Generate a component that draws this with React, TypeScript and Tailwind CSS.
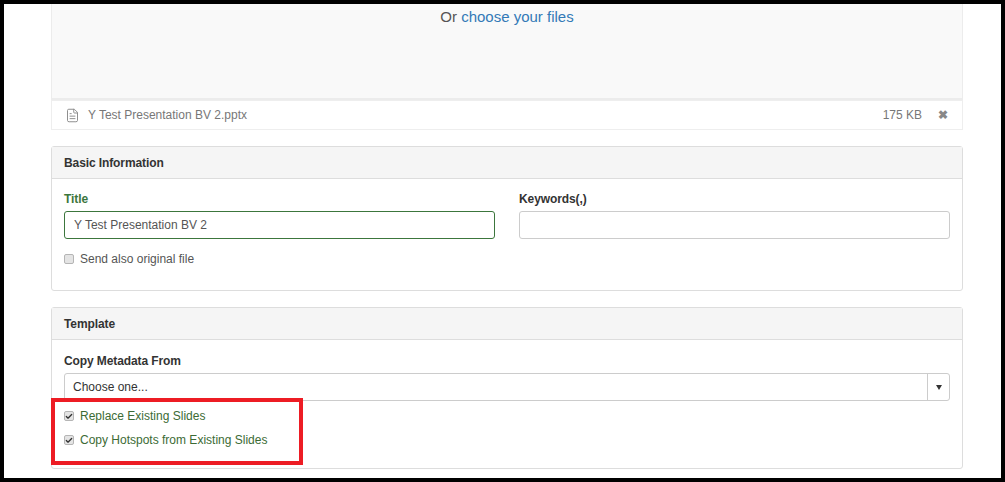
import { FileText, Check } from "lucide-react";

function CheckRow({ label, checked, green }: { label: string; checked?: boolean; green?: boolean }) {
  return (
    <label className="flex h-[24px] items-center">
      <span className="flex h-[10px] w-[10px] items-center justify-center rounded-[2px] border border-[#b5b5b5] bg-[#e4e4e4]">
        {checked && <Check className="h-[9px] w-[9px] text-[#333333]" strokeWidth={4} />}
      </span>
      <span className={`ml-[6px] text-[12px] ${green ? "text-[#3c6b35]" : "text-[#555555]"}`}>{label}</span>
    </label>
  );
}

function Panel({ title, className, children }: { title: string; className: string; children: React.ReactNode }) {
  return (
    <section className={`rounded-[3px] border border-[#dddddd] bg-white ${className}`}>
      <h3 className="flex h-[32px] items-center border-b border-[#dddddd] bg-[#f5f5f5] px-[12px] text-[12px] font-bold tracking-[-0.1px] text-[#333333]">
        {title}
      </h3>
      {children}
    </section>
  );
}

export default function App() {
  return (
    <div className="relative h-[482px] w-[1005px] overflow-hidden border-[4px] border-black bg-white font-['Liberation_Sans',sans-serif]">
      <div className="pl-[47px] pr-[38px]">
        <div className="h-[96px] border-x border-b-2 border-[#ececec] bg-[#f9f9f9] pt-[2px] text-center text-[15px] text-[#555555]">
          Or <a className="text-[#337ab7]">choose your files</a>
        </div>
        <div className="flex h-[30px] items-center border border-[#eeeeee] pl-[13px] pr-[14px] text-[12px] text-[#777777]">
          <FileText className="h-[15px] w-[15px] text-[#888888]" strokeWidth={1.5} />
          <span className="ml-[8px]">Y Test Presentation BV 2.pptx</span>
          <span className="ml-auto">175 KB</span>
          <span className="ml-[16px] text-[12px] font-bold leading-none text-[#888888]">✖</span>
        </div>

        <Panel title="Basic Information" className="mt-[16px] h-[145px]">
          <div className="grid grid-cols-2 gap-[24px] px-[12px] pt-[13px]">
            <div>
              <div className="text-[12px] font-bold leading-[14px] tracking-[-0.1px] text-[#3c763d]">Title</div>
              <input
                readOnly
                value="Y Test Presentation BV 2"
                className="mt-[5px] h-[28px] w-full rounded-[3px] border border-[#3c763d] px-[9px] text-[12px] text-[#555555] outline-none"
              />
            </div>
            <div>
              <div className="text-[12px] font-bold leading-[14px] tracking-[-0.1px] text-[#333333]">Keywords(,)</div>
              <input readOnly className="mt-[5px] h-[28px] w-full rounded-[3px] border border-[#cccccc] outline-none" />
            </div>
          </div>
          <div className="mt-[8px] px-[12px]">
            <CheckRow label="Send also original file" />
          </div>
        </Panel>

        <Panel title="Template" className="mt-[16px] h-[162px]">
          <div className="px-[12px] pt-[14px]">
            <div className="text-[12px] font-bold leading-[14px] tracking-[-0.1px] text-[#333333]">Copy Metadata From</div>
            <div className="mt-[5px] flex h-[28px] items-center rounded-[3px] border border-[#cccccc] text-[12px] text-[#333333]">
              <span className="flex-1 pl-[8px]">Choose one...</span>
              <span className="flex h-full w-[22px] items-center justify-center border-l border-[#cccccc]">
                <span className="h-0 w-0 border-x-[3px] border-t-[5px] border-x-transparent border-t-[#333333]" />
              </span>
            </div>
            <div className="mt-[3px]">
              <CheckRow label="Replace Existing Slides" checked green />
              <CheckRow label="Copy Hotspots from Existing Slides" checked green />
            </div>
          </div>
        </Panel>
      </div>
      <div className="absolute left-[47px] top-[394px] h-[67px] w-[252px] border-[4px] border-[#ed1c24]" />
    </div>
  );
}
